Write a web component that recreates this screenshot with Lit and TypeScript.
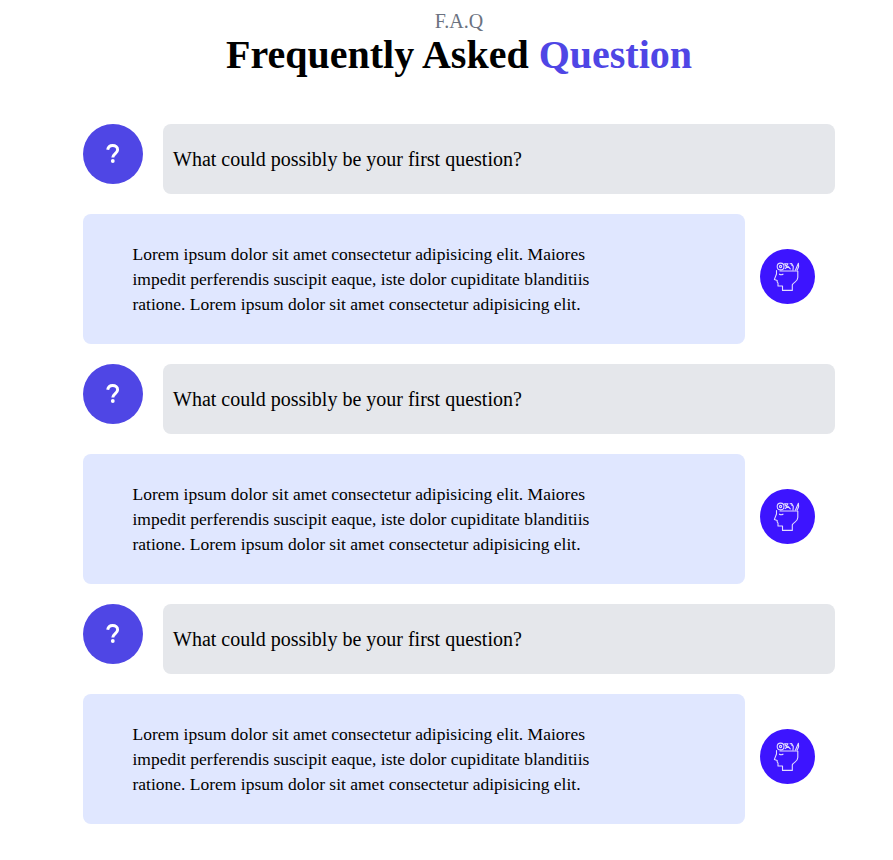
import { LitElement, html, css } from "lit";
import { customElement } from "lit/decorators.js";

const entries = Array.from({ length: 3 }, () => ({
  question: "What could possibly be your first question?",
  answer: [
    "Lorem ipsum dolor sit amet consectetur adipisicing elit. Maiores",
    "impedit perferendis suscipit eaque, iste dolor cupiditate blanditiis",
    "ratione. Lorem ipsum dolor sit amet consectetur adipisicing elit.",
  ],
}));

@customElement("app-root")
export class AppRoot extends LitElement {
  static styles = css`
    :host {
      display: block;
      box-sizing: border-box;
      height: 860px;
      padding: 9px 58px 0 83px;
      overflow: hidden;
      background: #fff;
      color: #000;
      font-family: "Liberation Serif", "Times New Roman", serif;
    }
    .head {
      text-align: center;
      height: 115px;
      white-space: nowrap;
    }
    .eyebrow {
      margin: 0;
      color: #6b7280;
      font-size: 20px;
      line-height: 25px;
    }
    .title {
      margin: 0;
      font-size: 40px;
      line-height: 42px;
      font-weight: 700;
    }
    .accent {
      color: #4f46e5;
    }
    .list {
      display: grid;
      gap: 20px;
    }
    .asked {
      display: flex;
      gap: 20px;
      height: 70px;
    }
    .badge {
      flex: none;
      width: 60px;
      height: 60px;
      border-radius: 50%;
      background: #4f46e5;
    }
    .question {
      flex: 1;
      box-sizing: border-box;
      padding: 0 10px;
      border-radius: 8px;
      background: #e5e7eb;
      font-size: 20px;
      line-height: 70px;
      white-space: nowrap;
    }
    .head,
    .asked {
      width: 752px;
    }
    .answered {
      display: flex;
      align-items: flex-start;
      gap: 15px;
      height: 130px;
    }
    .answer {
      box-sizing: border-box;
      width: 662px;
      height: 130px;
      padding: 28px 49.5px;
      border-radius: 8px;
      background: #e0e7ff;
      font-size: 17.5px;
      line-height: 25px;
      white-space: nowrap;
    }
    .brain {
      flex: none;
      width: 55px;
      height: 55px;
      margin-top: 35px;
    }
  `;

  private badge() {
    return html`<svg class="badge" viewBox="0 0 60 60" fill="none">
      <path
        d="M24.7 25.8C25.1 23 27 21.5 29.6 21.5C32.5 21.5 34.6 23.1 34.6 25.7C34.6 29.4 29.8 29.7 29.8 33.6"
        stroke="#fff" stroke-width="3"
      />
      <circle cx="29.8" cy="37" r="1.9" fill="#fff" />
    </svg>`;
  }

  private brain() {
    return html`<svg class="brain" viewBox="0 0 55 55" fill="none">
      <circle cx="27.5" cy="27.5" r="27.5" fill="#3d14ff" />
      <g stroke="#fff" stroke-width="1.1" stroke-opacity=".85" stroke-linejoin="round" stroke-linecap="round">
        <path d="M16.5 21.5V25L14.4 30.4L17.2 31.4V33L18 34V37H22.5V41.4H32.3V35.8C34 32.8 37.8 32.4 37.8 28.5V22H20" />
        <path d="M19.4 25.2Q21 26.3 23 25.2" />
        <circle cx="20.6" cy="17.5" r="3.4" />
        <circle cx="20.6" cy="17.5" r="1.1" />
        <path d="M24.6 14.8H28L26.2 17.4ZM25.2 19.5L28 17.4L30.3 19.8M30 14.8L31.8 14.6L32 16.6M33 21L33.3 17.5L32.3 15.5M35.5 21L38.4 14.3L38.6 17.7L37.2 21" />
      </g>
    </svg>`;
  }

  render() {
    return html`
      <header class="head">
        <p class="eyebrow">F.A.Q</p>
        <h1 class="title">Frequently Asked <span class="accent">Question</span></h1>
      </header>
      <main class="list">
        ${entries.map(
          (entry) => html`
            <div class="asked">
              ${this.badge()}
              <div class="question">${entry.question}</div>
            </div>
            <div class="answered">
              <div class="answer">
                ${entry.answer.map((line) => html`<div>${line}</div>`)}
              </div>
              ${this.brain()}
            </div>
          `,
        )}
      </main>
    `;
  }
}
